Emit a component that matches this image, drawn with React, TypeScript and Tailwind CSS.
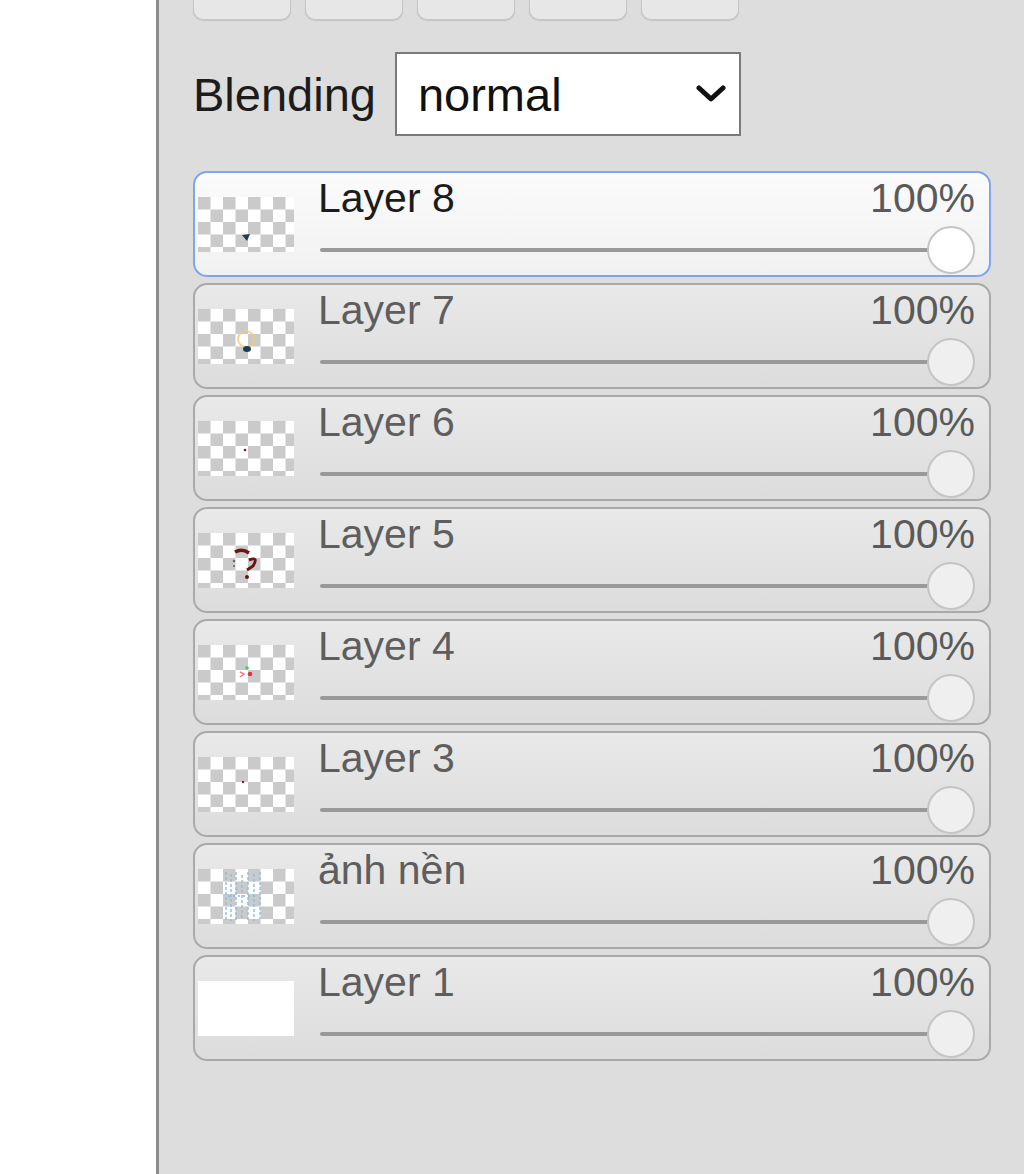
import type { ReactNode } from 'react';

type Layer = {
  name: string;
  opacity: number;
  selected?: boolean;
  art: ReactNode;
  solid?: boolean;
};

// Tiny previews of what each layer holds
const LAYERS: Layer[] = [
  {
    name: 'Layer 8',
    opacity: 100,
    selected: true,
    art: <path d="M44 38 L52 37 L49 44 Z" fill="#1d3f55" />,
  },
  {
    name: 'Layer 7',
    opacity: 100,
    art: (
      <>
        <circle cx="48" cy="30" r="8" fill="none" stroke="#f5c77a" strokeWidth="2" opacity="0.8" />
        <ellipse cx="49" cy="40" rx="4" ry="3" fill="#1d3f55" />
      </>
    ),
  },
  {
    name: 'Layer 6',
    opacity: 100,
    art: <circle cx="47" cy="29" r="1.3" fill="#7a2020" />,
  },
  {
    name: 'Layer 5',
    opacity: 100,
    art: (
      <>
        <path d="M37 19 Q44 15 51 20" stroke="#6b1515" strokeWidth="3.5" fill="none" />
        <path d="M51 27 Q61 23 55 33 L49 37" stroke="#6b1515" strokeWidth="3" fill="none" />
        <circle cx="49" cy="44" r="2" fill="#6b1515" />
        <circle cx="36" cy="28" r="1.2" fill="#8a5555" />
        <circle cx="36" cy="33" r="1" fill="#8a5555" />
      </>
    ),
  },
  {
    name: 'Layer 4',
    opacity: 100,
    art: (
      <>
        <circle cx="49" cy="23" r="1.8" fill="#3ad16b" />
        <path d="M42 27 L46 29 L42 32" stroke="#f07a8a" strokeWidth="1.4" fill="none" />
        <circle cx="52" cy="29" r="2.3" fill="#e8303f" />
      </>
    ),
  },
  {
    name: 'Layer 3',
    opacity: 100,
    art: <circle cx="45" cy="25" r="1.2" fill="#7a2020" />,
  },
  {
    name: 'ảnh nền',
    opacity: 100,
    art: (
      <g stroke="#8fbde0" strokeWidth="1.4" strokeDasharray="3 2" fill="none">
        <path d="M28 3 V53" />
        <path d="M33 5 V52" />
        <path d="M38 3 V53" />
        <path d="M44 6 V51" />
        <path d="M50 3 V53" />
        <path d="M56 5 V52" />
        <path d="M62 3 V50" />
        <path d="M30 27 H60" strokeDasharray="2 3" />
      </g>
    ),
  },
  {
    name: 'Layer 1',
    opacity: 100,
    solid: true,
    art: null,
  },
];

function Thumbnail({ layer, id }: { layer: Layer; id: string }) {
  return (
    <svg width="96" height="55" viewBox="0 0 96 55" className="shrink-0">
      <defs>
        <pattern id={id} width="25" height="25" patternUnits="userSpaceOnUse">
          <rect width="25" height="25" fill="#ffffff" />
          <rect width="12.5" height="12.5" fill="#cacaca" />
          <rect x="12.5" y="12.5" width="12.5" height="12.5" fill="#cacaca" />
        </pattern>
      </defs>
      <rect width="96" height="55" fill={layer.solid ? '#ffffff' : `url(#${id})`} />
      {layer.art}
    </svg>
  );
}

function OpacitySlider({ value, selected }: { value: number; selected?: boolean }) {
  return (
    <div className="relative h-[54px] w-full">
      <div
        className="absolute left-[2px] top-[27px] h-[4px] rounded-full bg-[#999999]"
        style={{ width: `calc(${value}% - 26px)` }}
      />
      <div
        className={`absolute top-[5px] h-[48px] w-[48px] rounded-full border-2 border-[#c4c4c4] ${
          selected ? 'bg-white' : 'bg-[#efefef]'
        }`}
        style={{ left: `calc(${value}% - 48px)` }}
      />
    </div>
  );
}

function LayerRow({ layer, index }: { layer: Layer; index: number }) {
  return (
    <div
      className={`flex h-[106px] items-center rounded-[14px] border-2 pl-[3px] pr-[14px] ${
        layer.selected
          ? 'border-[#7fa6ea] bg-gradient-to-b from-[#fbfbfb] to-[#f1f1f1]'
          : 'border-[#a9a9a9] bg-gradient-to-b from-[#e9e9e9] to-[#dcdcdc]'
      }`}
    >
      <Thumbnail layer={layer} id={`checker-${index}`} />
      <div className="ml-[24px] flex flex-1 flex-col self-stretch">
        <div className="mt-[2px] flex h-[46px] items-center justify-between text-[41px] leading-[46px]">
          <span className={layer.selected ? 'text-[#1c1c1c]' : 'text-[#5e5e5e]'}>{layer.name}</span>
          <span className="text-[#5a5a5a]">{layer.opacity}%</span>
        </div>
        <OpacitySlider value={layer.opacity} selected={layer.selected} />
      </div>
    </div>
  );
}

export default function App() {
  return (
    <div
      className="flex h-[1174px] w-[1024px] overflow-hidden bg-white"
      style={{ fontFamily: '"Liberation Sans", Arial, sans-serif' }}
    >
      <div className="w-[156px] shrink-0 bg-white" />

      <aside className="flex flex-1 flex-col border-l-[3px] border-[#8c8c8c] bg-[#dddddd] pl-[34px] pr-[33px]">
        {/* tool buttons, scrolled partly out of view */}
        <div className="flex gap-[14px]">
          {[0, 1, 2, 3, 4].map((i) => (
            <div
              key={i}
              className="h-[20px] w-[98px] rounded-b-[10px] border-x border-b border-[#c6c6c6] bg-[#e7e7e7] shadow-[0_1px_1px_rgba(0,0,0,0.12)]"
            />
          ))}
        </div>

        {/* blend mode */}
        <div className="mt-[32px] flex items-center">
          <span className="text-[47px] leading-none text-[#1c1c1c]">Blending</span>
          <div className="ml-[19px] flex h-[84px] w-[346px] items-center justify-between border-2 border-[#7a7a7a] bg-white pl-[21px] pr-[13px]">
            <span className="text-[47px] leading-none text-[#111111]">normal</span>
            <svg width="30" height="20" viewBox="0 0 30 20">
              <path d="M3 4 L15 15 L27 4" fill="none" stroke="#111111" strokeWidth="5" strokeLinecap="round" strokeLinejoin="round" />
            </svg>
          </div>
        </div>

        {/* layer stack */}
        <div className="mt-[35px] flex flex-col gap-[6px]">
          {LAYERS.map((layer, i) => (
            <LayerRow key={layer.name} layer={layer} index={i} />
          ))}
        </div>
      </aside>
    </div>
  );
}
